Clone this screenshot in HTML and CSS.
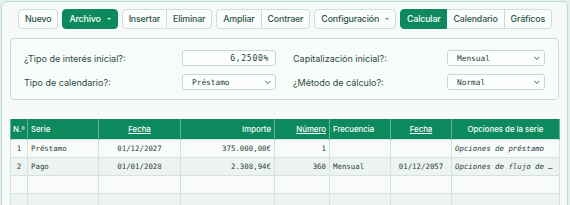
FILE: index.html
```html
<!DOCTYPE html>
<html lang="es">
<head>
<meta charset="utf-8">
<link rel="stylesheet" href="styles.css">
</head>
<body>
<div class="panel">
  <div class="toolbar">
    <button class="btn">Nuevo</button>
    <button class="btn primary">Archivo <span class="caret"></span></button>
    <div class="group">
      <button class="btn">Insertar</button>
      <button class="btn">Eliminar</button>
    </div>
    <div class="group">
      <button class="btn">Ampliar</button>
      <button class="btn">Contraer</button>
    </div>
    <button class="btn">Configuración <span class="caret dark"></span></button>
    <div class="group">
      <button class="btn primary">Calcular</button>
      <button class="btn">Calendario</button>
      <button class="btn">Gráficos</button>
    </div>
  </div>

  <div class="settings">
    <div class="field">
      <span class="label">¿Tipo de interés inicial?:</span>
      <div class="control input">6,2500%</div>
    </div>
    <div class="field">
      <span class="label">Capitalización inicial?:</span>
      <div class="control select wide">Mensual<span class="chev"></span></div>
    </div>
    <div class="field">
      <span class="label">Tipo de calendario?:</span>
      <div class="control select">Préstamo<span class="chev"></span></div>
    </div>
    <div class="field">
      <span class="label">¿Método de cálculo?:</span>
      <div class="control select wide">Normal<span class="chev"></span></div>
    </div>
  </div>

  <table class="grid">
    <colgroup>
      <col class="c1"><col class="c2"><col class="c3"><col class="c4">
      <col class="c5"><col class="c6"><col class="c7"><col class="c8">
    </colgroup>
    <thead>
      <tr>
        <th class="l">N.º</th>
        <th class="l">Serie</th>
        <th class="c"><u>Fecha</u></th>
        <th class="r">Importe</th>
        <th class="r"><u>Número</u></th>
        <th class="l">Frecuencia</th>
        <th class="c"><u>Fecha</u></th>
        <th class="c">Opciones de la serie</th>
      </tr>
    </thead>
    <tbody>
      <tr>
        <td class="c">1</td>
        <td class="l">Préstamo</td>
        <td class="c">01/12/2027</td>
        <td class="r">375.000,00€</td>
        <td class="r">1</td>
        <td class="l"></td>
        <td class="c"></td>
        <td class="l it">Opciones de préstamo</td>
      </tr>
      <tr>
        <td class="c">2</td>
        <td class="l">Pago</td>
        <td class="c">01/01/2028</td>
        <td class="r">2.308,94€</td>
        <td class="r">360</td>
        <td class="l">Mensual</td>
        <td class="c">01/12/2057</td>
        <td class="l it">Opciones de flujo de efectivo</td>
      </tr>
      <tr><td></td><td></td><td></td><td></td><td></td><td></td><td></td><td></td></tr>
      <tr><td></td><td></td><td></td><td></td><td></td><td></td><td></td><td></td></tr>
    </tbody>
  </table>
</div>
</body>
</html>
```

FILE: styles.css
```css
html, body {
  margin: 0;
  padding: 0;
}
body {
  background: #e2f1eb;
  font-family: Inter, "Noto Sans", sans-serif;
  color: #2b4a40;
  height: 205px;
  overflow: hidden;
}
.panel {
  margin: 1px 2px 0 1px;
  border: 1px solid #b9dccf;
  border-radius: 6px;
  background: #f6faf9;
  padding: 7px 8px 20px 8px;
  height: 260px;
}
.toolbar {
  display: flex;
  align-items: center;
  gap: 4px;
  margin-left: 8px;
  height: 20px;
}
.group {
  display: flex;
}
.group .btn {
  border-radius: 0;
}
.group .btn + .btn {
  border-left: none;
}
.group .btn:first-child {
  border-radius: 4px 0 0 4px;
}
.group .btn:last-child {
  border-radius: 0 4px 4px 0;
}
.btn {
  height: 20px;
  padding: 0 6px;
  border: 1px solid #cadfd7;
  border-radius: 4px;
  background: #fbfdfc;
  color: #2e5448;
  font-family: Inter, "Noto Sans", sans-serif;
  font-size: 8.8px;
  letter-spacing: -0.15px;
  font-weight: 500;
  display: flex;
  align-items: center;
  gap: 6px;
  line-height: 1;
}
.btn.primary {
  background: #0d8a5d;
  border-color: #0d8a5d;
  color: #ffffff;
}
.caret {
  width: 0;
  height: 0;
  border-left: 2px solid transparent;
  border-right: 2px solid transparent;
  border-top: 2px solid #ffffff;
  opacity: 0.9;
}
.caret.dark {
  border-top-color: #5a7a70;
}
.settings {
  margin-top: 9px;
  border: 1px solid #c5dcd3;
  border-radius: 4px;
  background: #f7fbfa;
  padding: 11px 13px 9px 13px;
  display: grid;
  grid-template-columns: 1fr 1fr;
  column-gap: 17px;
  row-gap: 8px;
}
.field {
  display: flex;
  align-items: center;
  justify-content: space-between;
  height: 16px;
}
.label {
  font-size: 9px;
  color: #2b4a40;
}
.control {
  height: 14px;
  border: 1px solid #c3d9d0;
  border-radius: 3px;
  background: #fcfefd;
  width: 92px;
  font-family: "DejaVu Sans Mono", "Liberation Mono", monospace;
  font-size: 7.8px;
  color: #26413a;
  display: flex;
  align-items: center;
  box-sizing: content-box;
}
.control.input {
  justify-content: flex-end;
  padding-right: 6px;
  width: 86px;
  font-size: 8.2px;
  letter-spacing: 0.6px;
}
.control.select {
  justify-content: space-between;
  padding: 0 6px 0 9px;
  width: 77px;
}
.control.select.wide {
  width: 81px;
}
.chev {
  width: 3px;
  height: 3px;
  border-right: 1px solid #6d8a80;
  border-bottom: 1px solid #6d8a80;
  transform: rotate(45deg) translateY(-1px);
}
.grid {
  margin-top: 19px;
  width: 549px;
  border-collapse: collapse;
  table-layout: fixed;
}
.c1 { width: 17px; }
.c2 { width: 71px; }
.c3 { width: 82px; }
.c4 { width: 94px; }
.c5 { width: 55px; }
.c6 { width: 61px; }
.c7 { width: 61px; }
.c8 { width: 108px; }
.grid th {
  height: 20px;
  background: #0d8a5d;
  color: #ffffff;
  font-family: Inter, "Noto Sans", sans-serif;
  font-size: 7.8px;
  font-weight: 500;
  padding: 0 3px;
  border-left: 1px solid #5fb493;
  border-right: 1px solid #5fb493;
  white-space: nowrap;
  overflow: hidden;
}
.grid th:first-child {
  padding: 0 2px;
}
.grid td {
  height: 17px;
  padding: 0 3px;
  border: 1px solid #d5e3de;
  font-family: "DejaVu Sans Mono", "Liberation Mono", monospace;
  font-size: 7.4px;
  color: #2b3f38;
  white-space: nowrap;
  overflow: hidden;
  text-overflow: ellipsis;
}
.grid tbody tr:nth-child(odd) td {
  background: #f9fbfb;
}
.grid tbody tr:nth-child(even) td {
  background: #edf3f1;
}
.l { text-align: left; }
.c { text-align: center; }
.r { text-align: right; }
.it { font-style: italic; }
```
